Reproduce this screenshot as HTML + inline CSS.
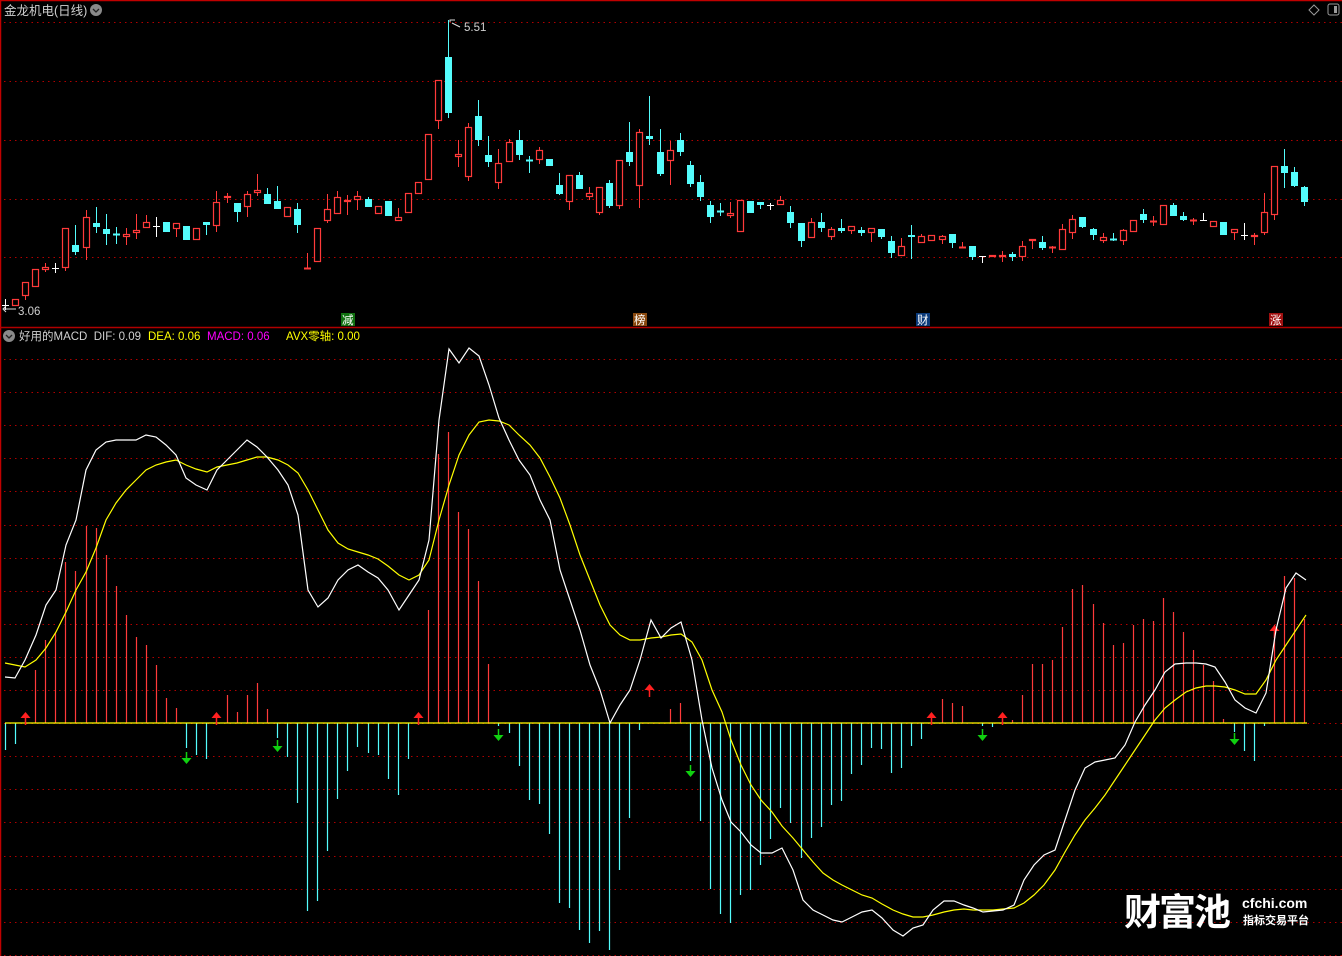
<!DOCTYPE html>
<html><head><meta charset="utf-8">
<style>
html,body{margin:0;padding:0;background:#000;width:1342px;height:956px;overflow:hidden}
svg{display:block}
text{font-family:"Liberation Sans","Noto Sans CJK SC",sans-serif}
</style></head>
<body>
<svg id="s" width="1342" height="956" xmlns="http://www.w3.org/2000/svg">
<rect width="1342" height="956" fill="#000"/>
<g id="grid"></g>
<line x1="0" y1="0.5" x2="1342" y2="0.5" stroke="#c00000" stroke-width="1.5"/>
<line x1="0.5" y1="0" x2="0.5" y2="956" stroke="#c00000" stroke-width="1.5"/>
<line x1="0" y1="327.5" x2="1342" y2="327.5" stroke="#b00000" stroke-width="1.5"/>
<text x="4" y="15" font-size="12.5" fill="#d0d0d0">金龙机电(日线)</text>
<circle cx="96" cy="10" r="6" fill="#8a8a8a"/>
<path d="M93 9 L96 12 L99 9" stroke="#222" stroke-width="1.3" fill="none"/>
<path d="M1314 5 L1319 10 L1314 15 L1309 10 Z" stroke="#9a9a9a" fill="none"/>
<rect x="1328" y="4" width="11" height="11" rx="2" stroke="#9a9a9a" fill="none"/>
<rect x="1334" y="6" width="3" height="7" fill="#9a9a9a"/>
<g id="candles"></g>
<path d="M450 22 L450 20 L455 20 M452 23 L460 27" stroke="#ddd" fill="none"/>
<text x="464" y="31" font-size="11.5" fill="#d0d0d0">5.51</text>
<path d="M4 309 L16 309 M6 306 L3 309 L6 312" stroke="#ddd" fill="none"/>
<text x="18" y="315" font-size="11.5" fill="#d0d0d0">3.06</text>
<rect x="341" y="313" width="14" height="13" fill="#107010"/><text x="342" y="324" font-size="11.5" fill="#fff">减</text>
<rect x="633" y="313" width="14" height="13" fill="#8a4a10"/><text x="634" y="324" font-size="11.5" fill="#fff">榜</text>
<rect x="916" y="313" width="14" height="13" fill="#0a3a7a"/><text x="917" y="324" font-size="11.5" fill="#fff">财</text>
<rect x="1269" y="313" width="14" height="13" fill="#a01010"/><text x="1270" y="324" font-size="11.5" fill="#fff">涨</text>
<circle cx="9" cy="336" r="6" fill="#8a8a8a"/>
<path d="M6 335 L9 338 L12 335" stroke="#222" stroke-width="1.3" fill="none"/>
<text x="19" y="340" font-size="11.5" fill="#d0d0d0">好用的MACD&#160; DIF: 0.09</text>
<text x="148" y="340" font-size="11.5" fill="#ffff00">DEA: 0.06</text>
<text x="207" y="340" font-size="11.5" fill="#ff00ff">MACD: 0.06</text>
<text x="286" y="340" font-size="11.5" fill="#ffff00">AVX零轴: 0.00</text>
<g id="hist"></g>
<line x1="5" y1="723" x2="1307" y2="723" stroke="#ffff00" stroke-width="1.3"/>
<g id="arrows"></g>
<polyline id="dea" fill="none" stroke="#ffff00" stroke-width="1.2"/>
<polyline id="dif" fill="none" stroke="#ffffff" stroke-width="1.2"/>
<text x="1124" y="925" font-size="37" font-weight="bold" fill="#fff" font-family="Noto Sans CJK SC,sans-serif" letter-spacing="-2">财富池</text>
<text x="1242" y="908" font-size="14" font-weight="bold" fill="#fff">cfchi.com</text>
<text x="1243" y="924" font-size="11" font-weight="bold" fill="#fff" font-family="Noto Sans CJK SC,sans-serif">指标交易平台</text>
</svg>
<script>
var NS="http://www.w3.org/2000/svg";
function el(p,t,a){var e=document.createElementNS(NS,t);for(var k in a)e.setAttribute(k,a[k]);p.appendChild(e);return e;}
var g=document.getElementById('grid');
[22,81,140,199,257].forEach(function(y){el(g,'line',{x1:4,y1:y+.5,x2:1342,y2:y+.5,stroke:'#b00000','stroke-dasharray':'1.5,4'});});
for(var y=359;y<=956;y+=33.1){var yy=Math.round(y)+.5;el(g,'line',{x1:4,y1:yy,x2:1342,y2:yy,stroke:'#b00000','stroke-dasharray':'1.5,4'});}
var C="w,305,305,299,310|r,299,306,299,306|r,282,296,282,300|r,269,287,269,287|r,267,270,263,272|w,268,268,263,273|r,228,268,228,271|c,245,252,225,255|r,217,248,210,260|c,223,227,207,233|c,229,234,214,245|c,234,234,227,244|r,234,237,228,245|r,230,233,214,239|r,222,228,215,228|w,226,226,217,237|c,222,232,222,232|r,223,229,223,237|c,226,240,226,240|r,228,240,228,240|c,222,225,222,235|r,202,226,191,232|r,196,198,193,203|c,203,212,203,222|r,194,207,191,217|r,190,193,174,196|c,194,204,188,204|c,201,209,186,209|r,207,217,207,217|c,209,225,203,233|r,268,269,253,269|r,228,262,228,262|r,209,221,194,223|r,197,214,191,214|r,200,202,195,215|r,196,200,191,210|c,199,207,197,207|r,206,214,206,214|c,201,216,201,216|r,217,221,208,221|r,193,213,193,213|r,182,194,182,194|r,134,180,134,180|r,80,121,80,129|c,57,113,20,118|r,154,157,140,167|r,127,177,123,181|c,116,140,100,146|c,155,162,136,167|r,163,183,149,189|r,142,162,139,162|c,140,155,130,160|c,160,160,156,173|r,150,160,147,164|c,159,166,159,166|c,185,194,173,195|r,175,202,175,210|c,175,189,172,189|r,193,197,187,200|r,187,213,187,215|c,183,206,180,208|r,160,206,160,209|c,152,162,122,166|r,132,186,129,208|c,136,139,96,145|c,152,174,129,176|r,150,161,141,185|c,140,152,133,156|c,165,184,161,187|c,182,197,175,201|c,205,217,201,223|c,211,211,203,216|r,213,216,202,218|r,200,232,200,232|c,201,213,201,213|c,202,205,202,209|w,205,205,203,210|r,200,205,196,205|c,212,223,206,228|c,223,241,223,247|r,222,238,218,238|c,222,228,213,232|r,229,237,227,240|c,228,231,219,233|r,226,231,226,234|c,230,233,227,236|r,228,233,228,242|c,229,237,229,239|c,241,253,236,258|r,246,256,238,256|c,235,237,225,259|r,236,243,234,243|r,235,241,235,241|r,236,240,235,244|c,234,243,234,248|r,247,248,242,248|c,246,257,246,260|w,256,256,256,263|r,255,257,255,257|r,255,257,251,262|c,254,257,252,261|r,246,257,241,261|r,239,241,239,249|c,242,248,236,250|r,247,248,246,253|r,229,250,224,250|r,219,233,215,239|c,217,227,217,228|c,229,235,228,240|r,237,241,233,243|c,239,239,233,241|r,230,241,229,245|r,220,232,220,232|c,214,220,209,223|r,221,222,216,226|r,205,225,205,225|c,205,216,203,216|c,216,220,212,221|r,220,220,218,225|w,220,220,213,221|r,221,227,221,227|c,222,235,222,235|r,229,233,229,240|w,235,235,223,240|r,235,237,233,245|r,212,233,193,235|r,166,215,166,220|c,166,173,149,188|c,172,186,167,187|c,187,202,186,206".split('|');
var cg=document.getElementById('candles');
function X(i){return Math.round(5+10.07*i)+.5;}
C.forEach(function(s,i){var p=s.split(',');var t=p[0],a=+p[1],b=+p[2],h=+p[3],l=+p[4];var x=X(i);
var col=t=='r'?'#ff3a3a':(t=='c'?'#54fcfc':'#ffffff');
el(cg,'line',{x1:x,y1:h,x2:x,y2:l,stroke:col});
if(b-a<=1){el(cg,'line',{x1:x-3.5,y1:a+.5,x2:x+3.5,y2:a+.5,stroke:col,'stroke-width':t=='w'?1:2});}
else if(t=='r'){el(cg,'rect',{x:x-3,y:a+.5,width:6,height:b-a-1,fill:'#000',stroke:col,'stroke-width':1.2});}
else{el(cg,'rect',{x:x-3.5,y:a,width:7,height:b-a,fill:col});}
});
var H=[750,744,723,670,640,633,562,571,526,528,555,586,615,637,645,665,698,708,748,755,759,723,695,712,695,683,709,738,757,803,911,901,851,799,771,747,753,755,779,795,759,723,610,454,432,512,529,581,664,726,733,766,800,804,834,903,908,930,943,931,950,870,818,730,723,723,709,703,761,821,889,914,923,895,890,865,839,808,823,858,838,827,805,801,774,765,748,749,773,768,746,739,723,699,703,706,723,726,727,723,720,695,664,664,660,627,589,585,604,623,645,643,625,619,621,598,612,632,650,665,681,719,732,751,761,726,625,576,578,619];
var hg=document.getElementById('hist');
H.forEach(function(v,i){if(v==723)return;var x=X(i);el(hg,'line',{x1:x,y1:723,x2:x,y2:v,stroke:v<723?'#ff3a3a':'#54fcfc','stroke-width':1.2});});
var ag=document.getElementById('arrows');
[2,21,41,64,92,99,126].forEach(function(i){var x=X(i),y=(i==126?626:(i==64?685:713));el(ag,'line',{x1:x,y1:y+4,x2:x,y2:y+12,stroke:'#ff2020','stroke-width':1.5});el(ag,'path',{d:'M'+(x-5)+' '+(y+5)+' L'+x+' '+(y-1)+' L'+(x+5)+' '+(y+5)+' Z',fill:'#ff2020'});});
[18,27,49,68,97,122].forEach(function(i){var x=X(i),y=(i==18?752:(i==27?740:(i==68?765:(i==122?733:729))));el(ag,'line',{x1:x,y1:y,x2:x,y2:y+7,stroke:'#10d010','stroke-width':1.5});el(ag,'path',{d:'M'+(x-5)+' '+(y+6)+' L'+x+' '+(y+12)+' L'+(x+5)+' '+(y+6)+' Z',fill:'#10d010'});});
var DIF="5,677 15,678 25,660 36,635 46,605 56,590 66,545 76,520 86,470 96,450 106,442 116,440 126,440 136,440 146,435 156,437 166,445 176,455 186,478 196,485 207,490 217,470 227,460 237,450 247,440 257,447 267,457 278,470 288,485 298,515 308,590 318,607 328,598 338,580 348,570 358,565 368,572 378,578 388,590 399,610 409,595 419,580 429,540 439,420 449,349 459,363 469,348 479,356 489,385 499,418 509,440 519,460 530,475 540,500 550,520 560,570 570,600 580,630 590,665 600,690 610,723 620,705 630,690 640,660 651,620 661,638 671,628 681,622 692,660 702,720 712,768 722,800 731,822 741,832 751,845 761,853 772,853 782,848 793,870 803,900 813,910 823,915 833,920 842,922 852,917 862,912 872,910 882,918 893,930 903,936 913,928 923,925 933,910 944,901 954,901 964,905 973,908 983,912 993,911 1003,910 1014,905 1024,880 1034,865 1044,855 1055,850 1065,820 1075,790 1085,768 1095,762 1105,760 1115,758 1125,745 1135,722 1145,705 1155,690 1165,672 1175,664 1186,663 1196,663 1206,664 1215,667 1225,682 1235,700 1245,708 1256,713 1266,693 1276,630 1286,588 1296,573 1306,580";
var DEA="5,663 15,665 25,667 36,660 46,648 56,632 66,612 76,590 86,572 96,548 106,520 116,503 126,490 136,480 146,470 156,465 166,462 176,460 186,465 196,469 207,472 217,467 227,465 237,463 247,460 257,457 267,457 278,460 288,465 298,473 308,490 318,510 328,530 338,543 348,549 358,552 368,555 378,559 388,566 399,575 409,580 419,575 429,560 439,520 449,485 459,455 469,435 479,422 489,420 499,421 509,425 519,435 530,445 540,458 550,477 560,498 570,525 580,555 590,580 600,605 610,625 620,635 630,640 640,640 651,638 661,637 671,635 681,634 692,642 702,660 712,690 722,712 731,740 741,765 751,785 761,800 772,812 782,826 793,838 803,850 813,862 823,873 833,880 842,885 852,890 862,895 872,898 882,904 893,910 903,914 913,917 923,917 933,915 944,912 954,910 964,909 973,910 983,910 993,910 1003,909 1014,908 1024,903 1034,895 1044,885 1055,870 1065,852 1075,835 1085,820 1095,808 1105,795 1115,780 1125,765 1135,750 1145,735 1155,720 1165,708 1175,700 1186,692 1196,688 1206,686 1215,686 1225,687 1235,690 1245,694 1256,694 1266,680 1276,660 1286,645 1296,630 1306,615";
document.getElementById('dif').setAttribute('points',DIF);
document.getElementById('dea').setAttribute('points',DEA);
</script>
</body></html>
